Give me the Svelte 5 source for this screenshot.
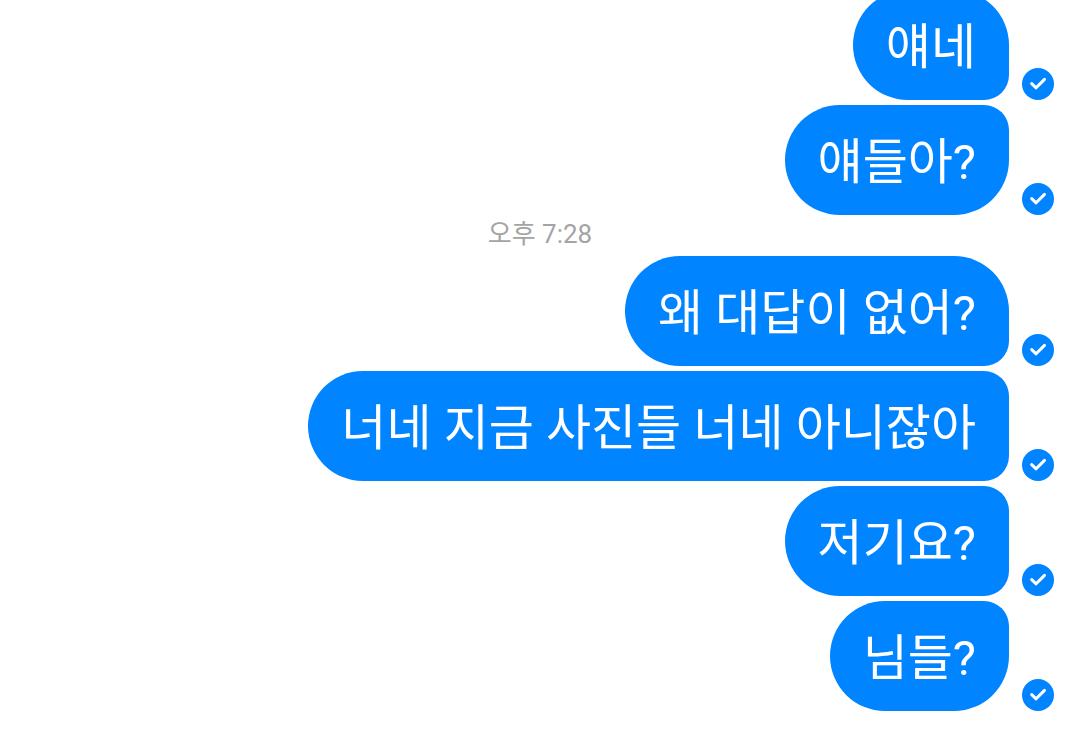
<script lang="ts">
	type Group = { time?: string; messages: string[] };

	const groups: Group[] = [
		{ messages: ['얘네', '얘들아?'] },
		{
			time: '오후 7:28',
			messages: ['왜 대답이 없어?', '너네 지금 사진들 너네 아니잖아', '저기요?', '님들?']
		}
	];
</script>

<main class="chat">
	{#each groups as group}
		{#if group.time}
			<time class="timestamp">{group.time}</time>
		{/if}
		<div class="group">
			{#each group.messages as message}
				<div class="row">
					<p class="bubble">{message}</p>
					<svg class="status" viewBox="0 0 32 32" role="img" aria-label="전송됨">
						<circle cx="16" cy="16" r="16" />
						<path d="M9.7 15.6 L14.1 19.8 L22.5 11.4" />
					</svg>
				</div>
			{/each}
		</div>
	{/each}
</main>

<style>
	:global(body) {
		background: #ffffff;
	}

	/* newest messages stay at the bottom, older ones run off the top */
	.chat {
		display: flex;
		flex-direction: column;
		justify-content: flex-end;
		box-sizing: border-box;
		height: 100vh;
		padding: 0 26px 43px;
		overflow: hidden;
		font-family: Roboto, 'Noto Sans CJK KR', sans-serif;
	}

	.timestamp {
		flex-shrink: 0;
		align-self: center;
		padding: 3px 0 6px;
		color: #a4a4a4;
		font-size: 26px;
		line-height: 32px;
	}

	.group {
		display: flex;
		flex-direction: column;
		flex-shrink: 0;
		gap: 5px;
	}

	.row {
		display: flex;
		justify-content: flex-end;
		align-items: flex-end;
		gap: 13px;
	}

	.bubble {
		margin: 0;
		padding: 28px 33px 22px;
		border-radius: 55px 25px 25px 55px;
		background: #0084ff;
		color: #ffffff;
		font-size: 49px;
		line-height: 60px;
	}

	.row:first-child .bubble {
		border-top-right-radius: 55px;
	}

	.row:last-child .bubble {
		border-bottom-right-radius: 55px;
	}

	.status {
		flex-shrink: 0;
		width: 32px;
		height: 32px;
	}

	.status circle {
		fill: #0084ff;
	}

	.status path {
		fill: none;
		stroke: #ffffff;
		stroke-width: 3;
		stroke-linecap: round;
		stroke-linejoin: round;
	}
</style>
